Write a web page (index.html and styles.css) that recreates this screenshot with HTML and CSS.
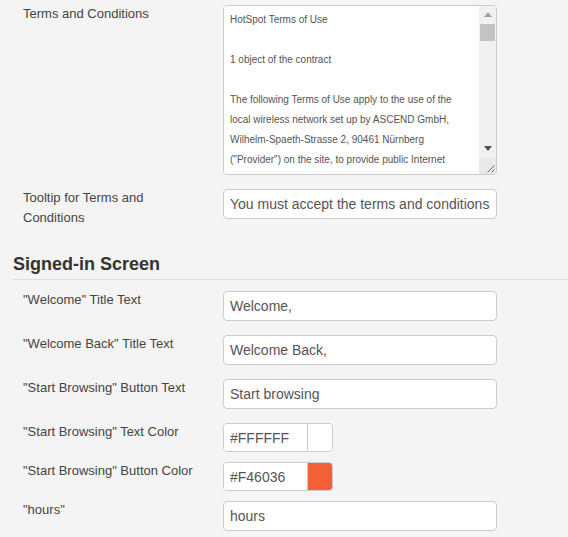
FILE: index.html
```html
<!DOCTYPE html>
<html lang="en">
<head>
  <meta charset="UTF-8">
  <meta name="viewport" content="width=device-width, initial-scale=1.0">
  <title>HotSpot settings</title>
  <link rel="stylesheet" href="styles.css">
</head>
<body>

<form class="settings">

  <div class="field">
    <label class="field-label" for="terms">Terms and Conditions</label>
    <div class="terms-box">
      <textarea id="terms" class="control terms">HotSpot Terms of Use

1 object of the contract

The following Terms of Use apply to the use of the
local wireless network set up by ASCEND GmbH,
Wilhelm-Spaeth-Strasse 2, 90461 Nürnberg
("Provider") on the site, to provide public Internet
access to the user ("User"). The Provider makes the
access available free of charge within the scope of
its technical and operational possibilities.

2 registration and access

The use of the hotspot requires that the User
accepts these Terms of Use. There is no claim to
the availability, quality or speed of the access.
The Provider may restrict or end the access at any
time, in particular to protect the network.

3 obligations of the user

The User undertakes not to use the access for
illegal purposes, not to violate the rights of third
parties and not to send or spread any unlawful or
harmful content. The User is responsible for all
content that is transmitted via the access.

4 liability

The Provider is not liable for damages caused by
the use of the hotspot, unless they are due to
intent or gross negligence. Data transmission is
not encrypted and may be seen by third parties.

5 data protection

Personal data is processed only as far as this is
required for the operation of the hotspot and
according to the applicable legal provisions.

6 final provisions

The law of the Federal Republic of Germany applies.
Should a provision of these Terms of Use be invalid,
the validity of the remaining provisions is not
affected.</textarea>
      <!-- scrollbar drawn by hand, the browser hides the native one -->
      <span class="scrollbar" aria-hidden="true">
        <span class="sb-btn sb-up"></span>
        <span class="sb-track"><span class="sb-thumb"></span></span>
        <span class="sb-btn sb-down"></span>
      </span>
      <span class="grip" aria-hidden="true">
        <svg width="17" height="17" viewBox="0 0 17 17">
          <path d="M15.5 8.5l-7 7M15.5 12.5l-3 3" stroke="#666" stroke-width="1" fill="none"/>
        </svg>
      </span>
    </div>
  </div>

  <div class="field">
    <label class="field-label" for="tooltip">Tooltip for Terms and Conditions</label>
    <input id="tooltip" class="control" type="text" value="You must accept the terms and conditions">
  </div>

  <h2 class="section-title">Signed-in Screen</h2>

  <div class="field">
    <label class="field-label" for="welcome">"Welcome" Title Text</label>
    <input id="welcome" class="control" type="text" value="Welcome,">
  </div>

  <div class="field">
    <label class="field-label" for="welcome-back">"Welcome Back" Title Text</label>
    <input id="welcome-back" class="control" type="text" value="Welcome Back,">
  </div>

  <div class="field">
    <label class="field-label" for="start-text">"Start Browsing" Button Text</label>
    <input id="start-text" class="control" type="text" value="Start browsing">
  </div>

  <div class="field field-color">
    <label class="field-label" for="start-color">"Start Browsing" Text Color</label>
    <div class="color-picker">
      <input id="start-color" type="text" value="#FFFFFF">
      <span class="swatch" style="background-color: #FFFFFF"></span>
    </div>
  </div>

  <div class="field field-color">
    <label class="field-label" for="button-color">"Start Browsing" Button Color</label>
    <div class="color-picker">
      <input id="button-color" type="text" value="#F46036">
      <span class="swatch" style="background-color: #F46036"></span>
    </div>
  </div>

  <div class="field">
    <label class="field-label" for="hours">"hours"</label>
    <input id="hours" class="control" type="text" value="hours">
  </div>

</form>

</body>
</html>
```

FILE: styles.css
```css
body {
  margin: 0;
  font-family: 'Liberation Sans', Arial, sans-serif;
  background-color: #f4f4f4;
  color: #444;
}

.settings {
  padding: 4px 0 0 13px;
}

.field {
  display: flex;
  align-items: flex-start;
  margin-bottom: 13px;
}

.field-label {
  box-sizing: border-box;
  width: 210px;
  flex-shrink: 0;
  padding: 0 23px 0 10px;
  font-size: 13px;
  line-height: 20px;
  color: #444;
}

.control {
  box-sizing: border-box;
  width: 274px;
  height: 30px;
  margin: 1px 0 0;
  padding: 0 6px;
  border: 1px solid #ccc;
  border-radius: 4px;
  background: #fff;
  font-family: 'Liberation Sans', Arial, sans-serif;
  font-size: 14px;
  color: #555;
  outline: none;
}

/* terms textarea */

.terms-box {
  position: relative;
  margin-top: 1px;
}

.terms {
  display: block;
  height: 170px;
  margin: 0;
  padding: 4px 23px 4px 6px;
  font-size: 10px;
  line-height: 20px;
  resize: vertical;
  overflow-y: auto;
}

.scrollbar {
  position: absolute;
  top: 1px;
  right: 1px;
  width: 17px;
  height: 151px;
  display: flex;
  flex-direction: column;
  background: #f1f1f1;
  border-top-right-radius: 3px;
}

.sb-btn {
  height: 17px;
  display: flex;
  align-items: center;
  justify-content: center;
}

.sb-up::before {
  content: '';
  border-left: 4px solid transparent;
  border-right: 4px solid transparent;
  border-bottom: 5px solid #a3a3a3;
}

.sb-down::before {
  content: '';
  border-left: 4px solid transparent;
  border-right: 4px solid transparent;
  border-top: 5px solid #505050;
}

.sb-track {
  flex: 1;
  padding-top: 1px;
}

.sb-thumb {
  display: block;
  height: 17px;
  margin: 0 1px;
  background: #c3c3c3;
}

.grip {
  position: absolute;
  right: 1px;
  bottom: 1px;
  width: 17px;
  height: 17px;
  background: #e9e9e9;
  border-bottom-right-radius: 3px;
  pointer-events: none;
}

.grip svg {
  display: block;
}

.section-title {
  margin: 0 0 10px;
  padding: 12px 0 4px;
  border-bottom: 1px solid #ddd;
  font-size: 18px;
  line-height: 22px;
  font-weight: bold;
  color: #333;
}

/* colour fields */

.field-color {
  margin-bottom: 9px;
}

.color-picker {
  display: flex;
  box-sizing: border-box;
  width: 110px;
  height: 29px;
  margin-top: 1px;
  border: 1px solid #ccc;
  border-radius: 4px;
  background: #fff;
  overflow: hidden;
}

.color-picker input {
  box-sizing: border-box;
  width: 83px;
  height: 100%;
  padding: 0 6px;
  border: none;
  font-family: 'Liberation Sans', Arial, sans-serif;
  font-size: 14px;
  color: #555;
  outline: none;
}

.swatch {
  flex: 1;
  border-left: 1px solid #ccc;
}
```
